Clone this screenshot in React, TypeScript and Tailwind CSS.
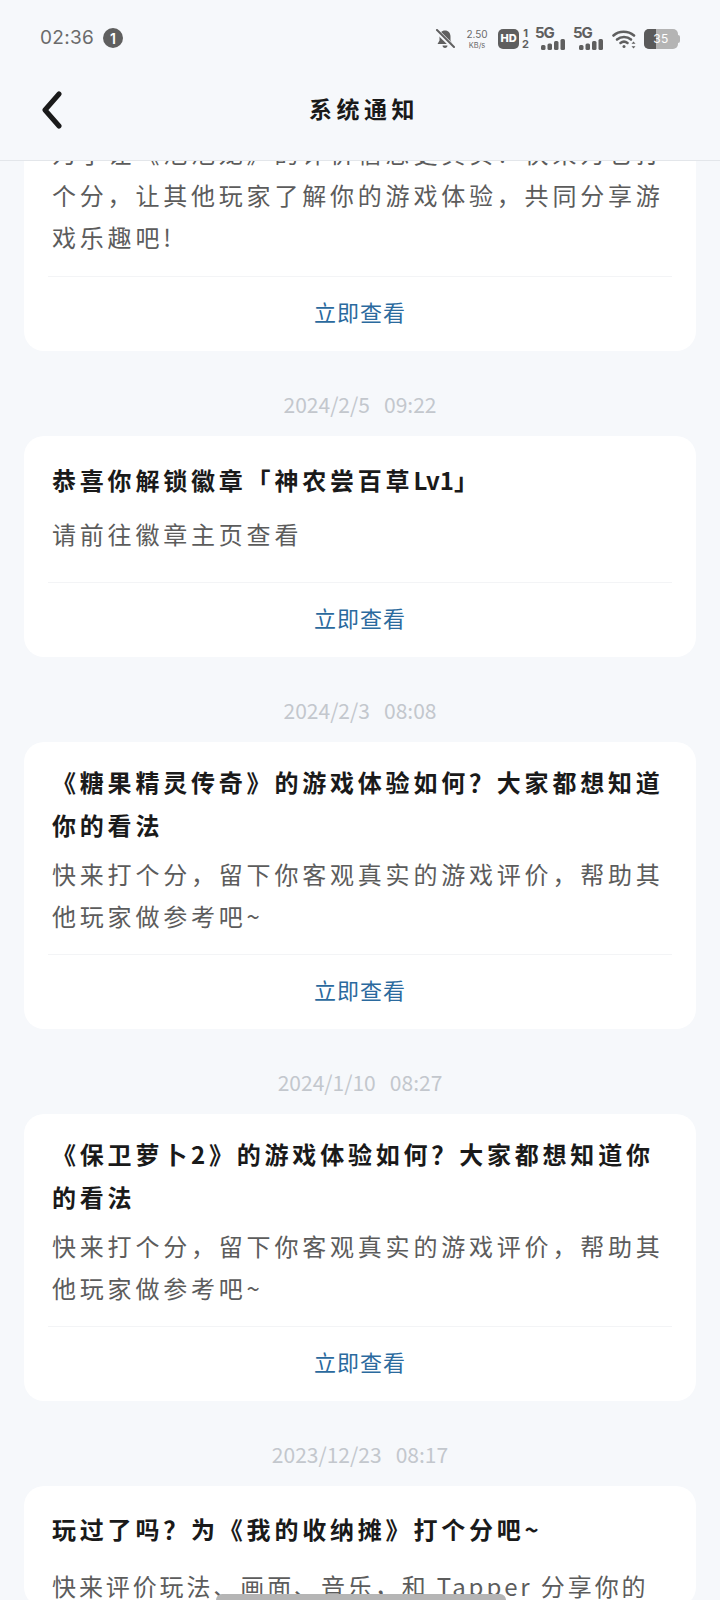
// full-width punctuation, written as escapes so it stays full width
const COMMA = "\uFF0C";
const QMARK = "\uFF1F";

const gameBody = `快来打个分${COMMA}留下你客观真实的游戏评价${COMMA}帮助其他玩家做参考吧~`;

type Notice = {
  date?: string;
  title?: React.ReactNode;
  body: string;
  single?: boolean;
};

const notices: Notice[] = [
  {
    date: "2024/2/5\u00a0\u00a0\u00a009:22",
    title: (
      <>
        恭喜你解锁徽章「神农尝百草<span className="tracking-[0px]">Lv1</span>」
      </>
    ),
    body: "请前往徽章主页查看",
    single: true,
  },
  {
    date: "2024/2/3\u00a0\u00a0\u00a008:08",
    title: `《糖果精灵传奇》的游戏体验如何${QMARK}大家都想知道你的看法`,
    body: gameBody,
  },
  {
    date: "2024/1/10\u00a0\u00a0\u00a008:27",
    title: `《保卫萝卜2》的游戏体验如何${QMARK}大家都想知道你的看法`,
    body: gameBody,
  },
];

function SignalBars() {
  return (
    <svg width="24" height="11" viewBox="0 0 24 11" fill="#5f5f5f">
      <rect x="0" y="6" width="4.500" height="5" rx="1.500" />
      <rect x="6.500" y="4.500" width="4.500" height="6.500" rx="1.500" />
      <rect x="13" y="2" width="4.500" height="9" rx="1.500" />
      <rect x="19.500" y="0" width="4.500" height="11" rx="1.500" />
    </svg>
  );
}

function FiveG() {
  return (
    <div className="flex w-[30px] flex-col">
      <span className="h-[12px] text-[15px] leading-[12px] font-bold text-[#5f5f5f] tracking-[-1px]">
        5G
      </span>
      <div className="flex justify-end">
        <SignalBars />
      </div>
    </div>
  );
}

function StatusBar() {
  return (
    <div className="flex h-[76px] items-start pt-[27px] pl-[40px] pr-[40px] font-['Inter',sans-serif]">
      <span className="w-[63px] text-[19px] leading-[22px] tracking-[0.300px] text-[#6b6b6b]">02:36</span>
      <span className="mt-[1px] flex h-[20px] w-[20px] items-center justify-center rounded-full bg-[#5f5f5f] text-[14px] font-semibold text-white">
        1
      </span>
      <div className="ml-auto flex items-center">
        <svg width="20" height="20" viewBox="0 0 20 20" fill="#5f5f5f">
          <path d="M10 1.500c-3.400 0-5.500 2.600-5.500 6v4L2.500 15h15l-2-3.500v-4c0-3.400-2.100-6-5.500-6z" />
          <path d="M7.500 16.500h5c0 1.400-1.100 2.500-2.500 2.500s-2.500-1.100-2.500-2.500z" />
          <path d="M1.500 1.500l17 17" stroke="#f6f8fb" strokeWidth="4.500" />
          <path d="M2 1l17 17" stroke="#5f5f5f" strokeWidth="2" strokeLinecap="round" />
        </svg>
        <div className="ml-[11px] flex w-[22px] flex-col items-center text-[#6b6b6b]">
          <span className="text-[10px] leading-[12px]">2.50</span>
          <span className="mt-[1px] text-[7.500px] leading-[9px]">KB/s</span>
        </div>
        <div className="ml-[10px] flex h-[20px] w-[21px] items-center justify-center rounded-[5px] bg-[#5f5f5f] text-[11px] font-extrabold text-white">
          HD
        </div>
        <div className="ml-[2px] flex w-[9px] flex-col items-center text-[11px] leading-[11px] font-bold text-[#5f5f5f]">
          <span>1</span>
          <span>2</span>
        </div>
        <div className="ml-[5px]">
          <FiveG />
        </div>
        <div className="ml-[8px]">
          <FiveG />
        </div>
        <svg className="ml-[9px]" width="25" height="20" viewBox="0 0 25 20" fill="none" stroke="#5f5f5f" strokeWidth="2.600" strokeLinecap="round">
          <path d="M1.500 6.500C7 1.500 16 1.500 22 6.500" />
          <path d="M5 10.500c4-3.400 10-3.400 14 0" />
          <path d="M8.500 14c2-1.500 5-1.500 7 0" />
          <circle cx="12" cy="17.500" r="1.500" fill="#5f5f5f" stroke="none" />
          <path d="M21.500 12.500l-2 2.200h4zM21.500 19.500l-2-2.200h4z" fill="#5f5f5f" stroke="none" />
        </svg>
        <div className="ml-[7px] flex items-center">
          <div className="relative flex h-[20px] w-[34px] items-center justify-center overflow-hidden rounded-[5px] bg-[#b4b4b4]">
            <div className="absolute inset-y-0 left-0 w-[12px] bg-[#5a5a5a]" />
            <span className="relative text-[12px] font-normal tracking-[0.500px] text-white">35</span>
          </div>
          <div className="h-[8px] w-[2px] rounded-r-sm bg-[#b4b4b4]" />
        </div>
      </div>
    </div>
  );
}

function Header() {
  return (
    <div className="relative z-10 h-[161px] shrink-0 border-b border-[#e3e6ea] bg-[#f6f8fb]">
      <StatusBar />
      <div className="flex h-[68px] items-center pl-[40px]">
        <svg width="24" height="38" viewBox="0 0 24 38" fill="none">
          <path d="M19 3L5 19l14 16" stroke="#1a1a1a" strokeWidth="5" strokeLinecap="round" strokeLinejoin="round" />
        </svg>
        <h1 className="mb-[4px] ml-[245px] text-[23px] leading-[30px] font-bold tracking-[4.500px] text-[#1a1a1a]">
          系统通知
        </h1>
      </div>
    </div>
  );
}

function ViewButton() {
  return (
    <div className="mx-[24px] h-[75px] border-t border-[#f3f4f6] pt-[17px] text-center text-[22px] leading-[34px] tracking-[1px] text-[#2b6a9e]">
      立即查看
    </div>
  );
}

function DateLabel({ date }: { date: string }) {
  return (
    <div className="flex h-[85px] items-center justify-center pt-[23px] text-[21px] text-[#c3c7cd]">
      {date}
    </div>
  );
}

function NoticeCard({ title, body, single }: Notice) {
  return (
    <div className="rounded-[20px] bg-white">
      <div className={single ? "px-[28px] pt-[22px] pb-[27px]" : "px-[28px] pt-[18px] pb-[17px]"}>
        <h2 className={single ? "mb-[12px] text-[24px] leading-[43px] font-bold tracking-[3.800px] text-[#1a1a1a]" : "mb-[7px] text-[24px] leading-[43px] font-bold tracking-[3.800px] text-[#1a1a1a]"}>
          {title}
        </h2>
        <p className="text-[24px] leading-[42px] tracking-[3.800px] text-[#5c5c5c]">{body}</p>
      </div>
      <ViewButton />
    </div>
  );
}

export default function App() {
  return (
    <div className="relative flex h-[1600px] w-[720px] flex-col overflow-hidden bg-[#f6f8fb] font-['Noto_Sans_CJK_SC','Noto_Sans',sans-serif]">
      <Header />
      <div className="min-h-0 flex-1 overflow-hidden px-[24px]">
        {/* first card is scrolled up under the header */}
        <div className="-mt-[29px] rounded-[20px] bg-white">
          <div className="px-[28px] pb-[18px]">
            <p className="text-[24px] leading-[42px] tracking-[3.800px] text-[#5c5c5c]">
              {`为了让《泡泡龙》的评价信息更真实${QMARK}快来为它打个分${COMMA}让其他玩家了解你的游戏体验${COMMA}共同分享游戏乐趣吧!`}
            </p>
          </div>
          <ViewButton />
        </div>
        {notices.map((n) => (
          <div key={n.date}>
            <DateLabel date={n.date ?? ""} />
            <NoticeCard {...n} />
          </div>
        ))}
        <DateLabel date={"2023/12/23\u00a0\u00a0\u00a008:17"} />
        <div className="rounded-[20px] bg-white px-[28px] pt-[21px]">
          <h2 className="mb-[15px] text-[24px] leading-[43px] font-bold tracking-[3.800px] text-[#1a1a1a]">
            {`玩过了吗${QMARK}为《我的收纳摊》打个分吧~`}
          </h2>
          <p className="h-[42px] overflow-hidden text-[24px] leading-[42px] tracking-[2.900px] text-[#5c5c5c]">
            {`快来评价玩法、画面、音乐${COMMA}和 Tapper 分享你的`}
          </p>
        </div>
      </div>
      <div className="absolute bottom-0 left-[216px] h-[6px] w-[290px] rounded-t-full bg-[#b5b5b5]" />
    </div>
  );
}
